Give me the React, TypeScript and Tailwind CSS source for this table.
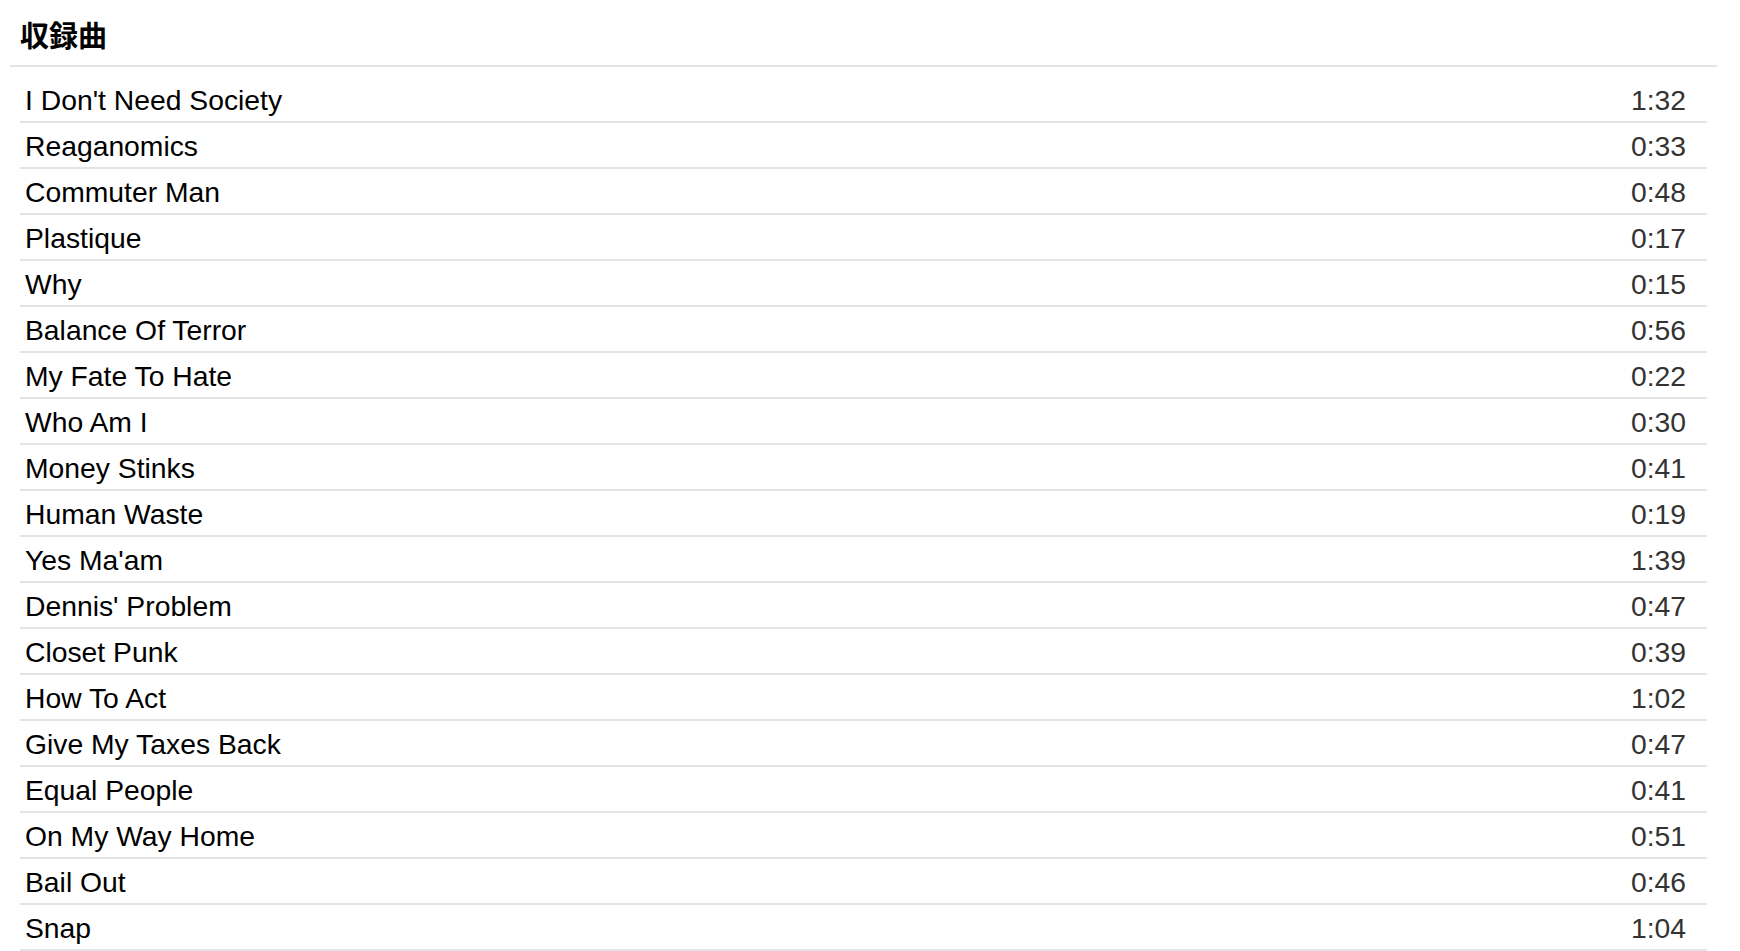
const tracks: { title: string; time: string }[] = [
  { title: "I Don't Need Society", time: "1:32" },
  { title: "Reaganomics", time: "0:33" },
  { title: "Commuter Man", time: "0:48" },
  { title: "Plastique", time: "0:17" },
  { title: "Why", time: "0:15" },
  { title: "Balance Of Terror", time: "0:56" },
  { title: "My Fate To Hate", time: "0:22" },
  { title: "Who Am I", time: "0:30" },
  { title: "Money Stinks", time: "0:41" },
  { title: "Human Waste", time: "0:19" },
  { title: "Yes Ma'am", time: "1:39" },
  { title: "Dennis' Problem", time: "0:47" },
  { title: "Closet Punk", time: "0:39" },
  { title: "How To Act", time: "1:02" },
  { title: "Give My Taxes Back", time: "0:47" },
  { title: "Equal People", time: "0:41" },
  { title: "On My Way Home", time: "0:51" },
  { title: "Bail Out", time: "0:46" },
  { title: "Snap", time: "1:04" },
];

function TrackRow({ title, time }: { title: string; time: string }) {
  return (
    <li className="flex flex-row items-center justify-between border-b-2 border-[#e4e4e4] pt-[3px] pl-[5px] pr-[21px] leading-[41px]">
      <span className="text-black">{title}</span>
      <span className="text-[#333333]">{time}</span>
    </li>
  );
}

export default function App() {
  return (
    <div className="min-h-screen bg-white pl-[10px] pr-[23px] font-['Liberation_Sans',Arial,sans-serif]">
      <div className="border-b-2 border-[#e4e4e4] pt-[14px] pb-[11px] pl-[10px]">
        <h2 className="text-[29px] font-bold leading-[40px] text-black font-['Noto_Sans_CJK_JP','Liberation_Sans',sans-serif]">
          収録曲
        </h2>
      </div>
      <ul className="mx-[10px] mt-[10px] text-[28.3px]">
        {tracks.map((t) => (
          <TrackRow key={t.title} title={t.title} time={t.time} />
        ))}
      </ul>
    </div>
  );
}
